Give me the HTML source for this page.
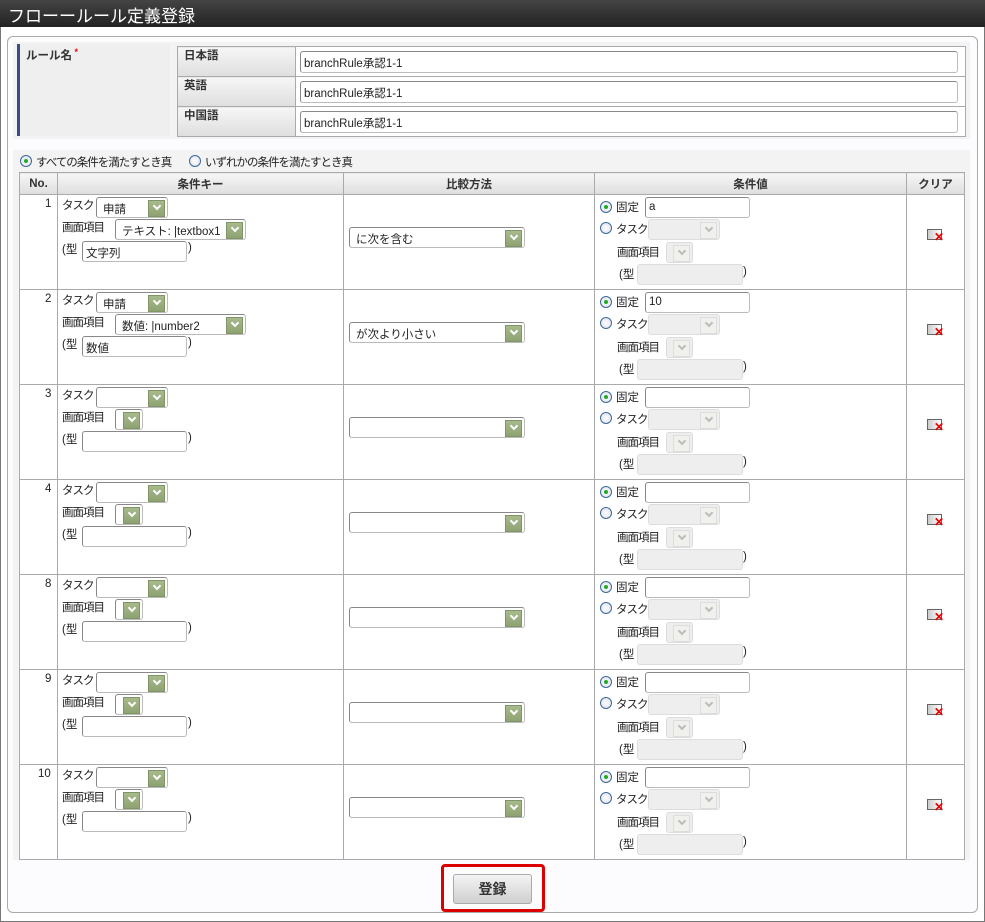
<!DOCTYPE html>
<html><head><meta charset="utf-8"><style>
*{box-sizing:border-box;margin:0;padding:0}
body{width:985px;height:922px;position:relative;background:#fff;font-family:"Liberation Sans","Noto Sans CJK JP",sans-serif;font-size:11.5px;color:#222;overflow:hidden}
.a{position:absolute}
.frame{left:0;top:0;width:985px;height:922px;border-left:1px solid #777;border-right:1px solid #777;border-bottom:1px solid #777}
.title{left:0;top:0;width:985px;height:27px;background:linear-gradient(#444,#222);color:#fff;font-size:17px;padding:2px 0 0 8px}
.panel{left:7px;top:36px;width:971px;height:877px;border:1px solid #aaa;border-radius:6px;background:#fcfcfe}
.sel{position:absolute;background:#fff;border:1px solid #bbb;border-top-color:#888;border-left-color:#888;border-radius:3px;height:21px;padding:3px 0 0 6px;white-space:nowrap;overflow:hidden}
.sel::after{content:"";position:absolute;right:2px;top:2px;width:15px;height:15px;background:linear-gradient(#a8ba8c,#8ea272);border:1px solid #7f9566}
.sel::before{content:"";position:absolute;right:7px;top:5px;width:4px;height:4px;border-right:2px solid #fff;border-bottom:2px solid #fff;transform:rotate(45deg);z-index:2}
.dis{background:#eee;border-color:#ddd}
.dis::after{background:#f0f0ec;border-color:#ddd}
.dis::before{border-color:#bbb}
.inp{position:absolute;background:#fff;border:1px solid #bbb;border-top-color:#888;border-left-color:#888;border-radius:3px;height:21px;padding:3px 0 0 3px}
.dinp{position:absolute;background:#eee;border:1px solid #ddd;border-radius:3px;height:21px}
.rad{position:absolute;width:12px;height:12px;border-radius:50%;border:1px solid #3a6a9a;background:radial-gradient(#fff,#dde)}
.rad.on::after{content:"";position:absolute;left:3px;top:3px;width:4px;height:4px;border-radius:50%;background:#2a2}
.t{position:absolute;white-space:nowrap}
.n{letter-spacing:-1px}
.r{position:absolute;left:0;width:985px;height:95px}
.clr{position:absolute;left:927px;top:35px;width:15px;height:11px;border:1px solid #666;background:linear-gradient(90deg,#ccc,#fff)}
.clr::after{content:"✕";position:absolute;left:6px;top:1px;color:#e00;font-size:12px;font-weight:bold;line-height:12px}
table{border-collapse:collapse}
td,th{border:1px solid #aaa}
th{background:linear-gradient(#f6f6f6,#dedede);font-weight:bold;color:#333;font-size:11.5px}
</style></head><body>
<div class="a frame"></div>
<div class="a title">フローールール定義登録</div>
<div class="a panel"></div>
<div class="a" style="left:13px;top:42px;width:957px;height:97px;background:#f3f3f3"></div>
<div class="a" style="left:17px;top:44px;width:153px;height:92px;background:#efefef;border-left:3px solid #3a4f8a"></div>
<div class="t" style="left:26px;top:47px;font-weight:bold;color:#333">ルール名<span style="color:#e00;font-size:9px;vertical-align:top"> *</span></div>
<table class="a" style="left:177px;top:46px;width:789px">
<tr style="height:30px"><th style="width:118px;text-align:left;padding:0 0 6px 6px;vertical-align:top">日本語</th><td style="background:#fff"></td></tr>
<tr style="height:30px"><th style="text-align:left;padding:0 0 6px 6px;vertical-align:top">英語</th><td style="background:#fff"></td></tr>
<tr style="height:30px"><th style="text-align:left;padding:0 0 6px 6px;vertical-align:top">中国語</th><td style="background:#fff"></td></tr>
</table>
<div class="inp" style="left:300px;top:51px;width:658px;height:22px">branchRule承認1-1</div>
<div class="inp" style="left:300px;top:81px;width:658px;height:22px">branchRule承認1-1</div>
<div class="inp" style="left:300px;top:111px;width:658px;height:22px">branchRule承認1-1</div>
<div class="a" style="left:13px;top:150px;width:957px;height:710px;background:#f3f3f3"></div>
<div class="rad on" style="left:20px;top:155px"></div><div class="t n" style="left:36px;top:154px">すべての条件を満たすとき真</div>
<div class="rad" style="left:189px;top:155px"></div><div class="t n" style="left:205px;top:154px">いずれかの条件を満たすとき真</div>
<table class="a" style="left:19px;top:172px;width:946px;background:#fff">
<tr style="height:22px"><th style="width:38px">No.</th><th style="width:286px">条件キー</th><th style="width:251px">比較方法</th><th style="width:312px">条件値</th><th>クリア</th></tr>
<tr style="height:95px"><td></td><td></td><td></td><td></td><td></td></tr>
<tr style="height:95px"><td></td><td></td><td></td><td></td><td></td></tr>
<tr style="height:95px"><td></td><td></td><td></td><td></td><td></td></tr>
<tr style="height:95px"><td></td><td></td><td></td><td></td><td></td></tr>
<tr style="height:95px"><td></td><td></td><td></td><td></td><td></td></tr>
<tr style="height:95px"><td></td><td></td><td></td><td></td><td></td></tr>
<tr style="height:95px"><td></td><td></td><td></td><td></td><td></td></tr>
</table>

<div class="r" style="top:194px">
<div class="t" style="left:45px;top:4px">1</div>
<div class="t n" style="left:62px;top:3px">タスク</div><div class="sel" style="left:96px;top:3px;width:72px">申請</div>
<div class="t n" style="left:62px;top:25px">画面項目</div><div class="sel" style="left:115px;top:25px;width:131px">テキスト: |textbox1</div>
<div class="t" style="left:62px;top:47px">(型</div><div class="inp" style="left:82px;top:47px;width:105px">文字列</div><div class="t" style="left:188px;top:48px">)</div>
<div class="sel" style="left:349px;top:33px;width:176px">に次を含む</div>
<div class="rad on" style="left:600px;top:7px"></div><div class="t" style="left:616px;top:5px">固定</div><div class="inp" style="left:645px;top:3px;width:105px">a</div>
<div class="rad" style="left:600px;top:28px"></div><div class="t n" style="left:616px;top:27px">タスク</div><div class="sel dis" style="left:648px;top:25px;width:72px"></div>
<div class="t n" style="left:617px;top:50px">画面項目</div><div class="sel dis" style="left:666px;top:48px;width:27px"></div>
<div class="t" style="left:619px;top:72px">(型</div><div class="dinp" style="left:637px;top:70px;width:106px"></div><div class="t" style="left:743px;top:72px">)</div>
<div class="clr"></div>
</div>
<div class="r" style="top:289px">
<div class="t" style="left:45px;top:4px">2</div>
<div class="t n" style="left:62px;top:3px">タスク</div><div class="sel" style="left:96px;top:3px;width:72px">申請</div>
<div class="t n" style="left:62px;top:25px">画面項目</div><div class="sel" style="left:115px;top:25px;width:131px">数値: |number2</div>
<div class="t" style="left:62px;top:47px">(型</div><div class="inp" style="left:82px;top:47px;width:105px">数値</div><div class="t" style="left:188px;top:48px">)</div>
<div class="sel" style="left:349px;top:33px;width:176px">が次より小さい</div>
<div class="rad on" style="left:600px;top:7px"></div><div class="t" style="left:616px;top:5px">固定</div><div class="inp" style="left:645px;top:3px;width:105px">10</div>
<div class="rad" style="left:600px;top:28px"></div><div class="t n" style="left:616px;top:27px">タスク</div><div class="sel dis" style="left:648px;top:25px;width:72px"></div>
<div class="t n" style="left:617px;top:50px">画面項目</div><div class="sel dis" style="left:666px;top:48px;width:27px"></div>
<div class="t" style="left:619px;top:72px">(型</div><div class="dinp" style="left:637px;top:70px;width:106px"></div><div class="t" style="left:743px;top:72px">)</div>
<div class="clr"></div>
</div>
<div class="r" style="top:384px">
<div class="t" style="left:45px;top:4px">3</div>
<div class="t n" style="left:62px;top:3px">タスク</div><div class="sel" style="left:96px;top:3px;width:72px"></div>
<div class="t n" style="left:62px;top:25px">画面項目</div><div class="sel" style="left:115px;top:25px;width:28px"></div>
<div class="t" style="left:62px;top:47px">(型</div><div class="inp" style="left:82px;top:47px;width:105px"></div><div class="t" style="left:188px;top:48px">)</div>
<div class="sel" style="left:349px;top:33px;width:176px"></div>
<div class="rad on" style="left:600px;top:7px"></div><div class="t" style="left:616px;top:5px">固定</div><div class="inp" style="left:645px;top:3px;width:105px"></div>
<div class="rad" style="left:600px;top:28px"></div><div class="t n" style="left:616px;top:27px">タスク</div><div class="sel dis" style="left:648px;top:25px;width:72px"></div>
<div class="t n" style="left:617px;top:50px">画面項目</div><div class="sel dis" style="left:666px;top:48px;width:27px"></div>
<div class="t" style="left:619px;top:72px">(型</div><div class="dinp" style="left:637px;top:70px;width:106px"></div><div class="t" style="left:743px;top:72px">)</div>
<div class="clr"></div>
</div>
<div class="r" style="top:479px">
<div class="t" style="left:45px;top:4px">4</div>
<div class="t n" style="left:62px;top:3px">タスク</div><div class="sel" style="left:96px;top:3px;width:72px"></div>
<div class="t n" style="left:62px;top:25px">画面項目</div><div class="sel" style="left:115px;top:25px;width:28px"></div>
<div class="t" style="left:62px;top:47px">(型</div><div class="inp" style="left:82px;top:47px;width:105px"></div><div class="t" style="left:188px;top:48px">)</div>
<div class="sel" style="left:349px;top:33px;width:176px"></div>
<div class="rad on" style="left:600px;top:7px"></div><div class="t" style="left:616px;top:5px">固定</div><div class="inp" style="left:645px;top:3px;width:105px"></div>
<div class="rad" style="left:600px;top:28px"></div><div class="t n" style="left:616px;top:27px">タスク</div><div class="sel dis" style="left:648px;top:25px;width:72px"></div>
<div class="t n" style="left:617px;top:50px">画面項目</div><div class="sel dis" style="left:666px;top:48px;width:27px"></div>
<div class="t" style="left:619px;top:72px">(型</div><div class="dinp" style="left:637px;top:70px;width:106px"></div><div class="t" style="left:743px;top:72px">)</div>
<div class="clr"></div>
</div>
<div class="r" style="top:574px">
<div class="t" style="left:45px;top:4px">8</div>
<div class="t n" style="left:62px;top:3px">タスク</div><div class="sel" style="left:96px;top:3px;width:72px"></div>
<div class="t n" style="left:62px;top:25px">画面項目</div><div class="sel" style="left:115px;top:25px;width:28px"></div>
<div class="t" style="left:62px;top:47px">(型</div><div class="inp" style="left:82px;top:47px;width:105px"></div><div class="t" style="left:188px;top:48px">)</div>
<div class="sel" style="left:349px;top:33px;width:176px"></div>
<div class="rad on" style="left:600px;top:7px"></div><div class="t" style="left:616px;top:5px">固定</div><div class="inp" style="left:645px;top:3px;width:105px"></div>
<div class="rad" style="left:600px;top:28px"></div><div class="t n" style="left:616px;top:27px">タスク</div><div class="sel dis" style="left:648px;top:25px;width:72px"></div>
<div class="t n" style="left:617px;top:50px">画面項目</div><div class="sel dis" style="left:666px;top:48px;width:27px"></div>
<div class="t" style="left:619px;top:72px">(型</div><div class="dinp" style="left:637px;top:70px;width:106px"></div><div class="t" style="left:743px;top:72px">)</div>
<div class="clr"></div>
</div>
<div class="r" style="top:669px">
<div class="t" style="left:45px;top:4px">9</div>
<div class="t n" style="left:62px;top:3px">タスク</div><div class="sel" style="left:96px;top:3px;width:72px"></div>
<div class="t n" style="left:62px;top:25px">画面項目</div><div class="sel" style="left:115px;top:25px;width:28px"></div>
<div class="t" style="left:62px;top:47px">(型</div><div class="inp" style="left:82px;top:47px;width:105px"></div><div class="t" style="left:188px;top:48px">)</div>
<div class="sel" style="left:349px;top:33px;width:176px"></div>
<div class="rad on" style="left:600px;top:7px"></div><div class="t" style="left:616px;top:5px">固定</div><div class="inp" style="left:645px;top:3px;width:105px"></div>
<div class="rad" style="left:600px;top:28px"></div><div class="t n" style="left:616px;top:27px">タスク</div><div class="sel dis" style="left:648px;top:25px;width:72px"></div>
<div class="t n" style="left:617px;top:50px">画面項目</div><div class="sel dis" style="left:666px;top:48px;width:27px"></div>
<div class="t" style="left:619px;top:72px">(型</div><div class="dinp" style="left:637px;top:70px;width:106px"></div><div class="t" style="left:743px;top:72px">)</div>
<div class="clr"></div>
</div>
<div class="r" style="top:764px">
<div class="t" style="left:38px;top:4px">10</div>
<div class="t n" style="left:62px;top:3px">タスク</div><div class="sel" style="left:96px;top:3px;width:72px"></div>
<div class="t n" style="left:62px;top:25px">画面項目</div><div class="sel" style="left:115px;top:25px;width:28px"></div>
<div class="t" style="left:62px;top:47px">(型</div><div class="inp" style="left:82px;top:47px;width:105px"></div><div class="t" style="left:188px;top:48px">)</div>
<div class="sel" style="left:349px;top:33px;width:176px"></div>
<div class="rad on" style="left:600px;top:7px"></div><div class="t" style="left:616px;top:5px">固定</div><div class="inp" style="left:645px;top:3px;width:105px"></div>
<div class="rad" style="left:600px;top:28px"></div><div class="t n" style="left:616px;top:27px">タスク</div><div class="sel dis" style="left:648px;top:25px;width:72px"></div>
<div class="t n" style="left:617px;top:50px">画面項目</div><div class="sel dis" style="left:666px;top:48px;width:27px"></div>
<div class="t" style="left:619px;top:72px">(型</div><div class="dinp" style="left:637px;top:70px;width:106px"></div><div class="t" style="left:743px;top:72px">)</div>
<div class="clr"></div>
</div>

<div class="a" style="left:441px;top:864px;width:104px;height:48px;border:3px solid #d00;border-radius:4px"></div>
<div class="a" style="left:453px;top:874px;width:79px;height:30px;border:1px solid #aaa;border-radius:3px;background:linear-gradient(#f4f4f4,#cfcfcf);font-weight:bold;font-size:14px;text-align:center;line-height:28px;color:#333">登録</div>
</body></html>
